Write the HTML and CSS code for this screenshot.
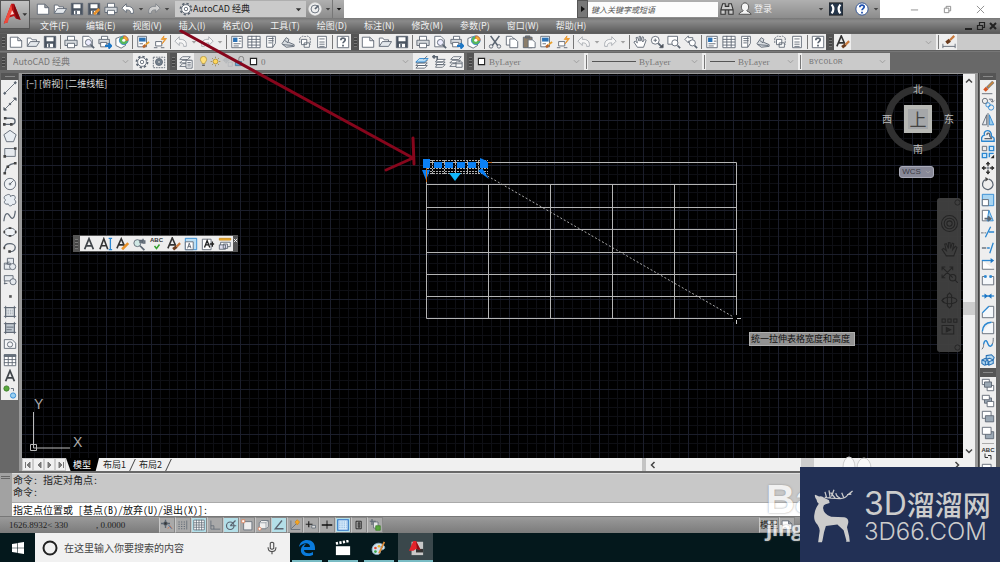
FILE: index.html
```html
<!DOCTYPE html>
<html lang="zh-CN">
<head>
<meta charset="utf-8">
<title>AutoCAD 经典</title>
<link rel="stylesheet" href="styles.css">
</head>
<body>
<svg class="sprite" aria-hidden="true">
  <symbol id="new" viewBox="0 0 16 16"><path fill="#fff" d="M1.500 2.500h8.500l4.500 4v7.500h-13zM10 2.500v4h4.500"/></symbol>
  <symbol id="open" viewBox="0 0 16 16"><path fill="#fff" d="M1.500 13V3.500h4l1.500 2h5V8"/><path fill="#e4e8ec" d="M1.500 13l3.500-5.500h10.500L12 13z"/></symbol>
  <symbol id="save" viewBox="0 0 16 16"><path fill="#4a5461" d="M1.500 1.500h13v13h-13z"/><path fill="#fff" stroke="none" d="M4 2.500h8v4.500H4zM4.500 10h7v4h-7z"/><path d="M7 10v4" stroke-width="2"/></symbol>
  <symbol id="saveas" viewBox="0 0 16 16"><use href="#save"/><path stroke="#e8912a" stroke-width="3" d="M8 14l6-6"/></symbol>
  <symbol id="print" viewBox="0 0 16 16"><path fill="#fff" d="M4 6V1.500h8V6"/><path fill="#d5d9dd" d="M1 6h14v6H1z"/><path fill="#fff" d="M4 9.500h8v5H4z"/></symbol>
  <symbol id="preview" viewBox="0 0 16 16"><path fill="#fff" d="M2 1.500h7l4 4v8H2z"/><circle cx="8.500" cy="8.500" r="3.500" fill="#eef"/><path stroke-width="2" d="M11 11l4 4"/></symbol>
  <symbol id="publish" viewBox="0 0 16 16"><path fill="#fff" d="M4 5V1.500h7V5"/><path fill="#d5d9dd" d="M1 5h12v5H1z"/><path fill="#fff" d="M3 8.500h7v5H3z"/><path stroke="#1b75c4" stroke-width="2.500" d="M8 12.500h5M12 9.500l3 3-3 3"/></symbol>
  <symbol id="cube" viewBox="0 0 16 16"><path fill="#fff" d="M1 4l5-2 6 2v8l-5 3-6-3z"/><circle cx="10" cy="6" r="5" fill="#58b957" stroke="#3987c8"/><path fill="#f2b233" stroke="#df6638" d="M10 6V1a5 5 0 0 1 5 5z"/><circle cx="10" cy="6" r="1.800" fill="#fff" stroke="none"/></symbol>
  <symbol id="match" viewBox="0 0 16 16"><path fill="#fff" d="M2 1.500h10v12H2z"/><path fill="#2b72b5" stroke="none" d="M3.500 3H11v4.500H3.500z"/><path d="M4 10h4" /><path stroke="#b8642a" stroke-width="3" d="M8 14l3-2.500"/><path stroke="#e8a02a" stroke-width="2" d="M11 11l4-3"/></symbol>
  <symbol id="batch" viewBox="0 0 16 16"><path fill="#fff" d="M3 7.500h7v5H3zM1 14.500h4M9 14.500h4"/><path stroke="#e8912a" fill="#f5b83a" d="M12.500 1l-3 4h4l-3 5 5-6h-3.500z"/></symbol>
  <symbol id="undo" viewBox="0 0 16 16"><path fill="#fff" d="M1 7l5-5v3c6-.5 9 2.500 8 8h-3c0-3-1-4-5-4v3z"/></symbol>
  <symbol id="redo" viewBox="0 0 16 16"><path fill="#fff" d="M15 7l-5-5v3C4 4.500 1 7.500 2 13h3c0-3 1-4 5-4v3z"/></symbol>
  <symbol id="props" viewBox="0 0 16 16"><path fill="#fff" d="M2 1.500h12v13H2z"/><path fill="#2b72b5" stroke="none" d="M3.500 3h5v5h-5z"/><path d="M10 4h3M10 7h3M4 10h8M4 12.500h6"/></symbol>
  <symbol id="center" viewBox="0 0 16 16"><path fill="#fff" d="M1 1.500h14v13H1z"/><path d="M5.500 1v13M10.500 1v13M1 5h14M1 8h14M1 11.500h14"/></symbol>
  <symbol id="palette" viewBox="0 0 16 16"><path fill="#fff" d="M3 1.500h10v8L10 14H3z"/><path d="M5 4h6M5 6.500h6M5 9h4M10 2v12"/></symbol>
  <symbol id="sheets" viewBox="0 0 16 16"><path fill="#d8dce0" d="M1 10l5-7 3 2-1 3 7 3v2l-9 1z"/><path d="M2 11l12 1M4 6l4 3"/></symbol>
  <symbol id="markup" viewBox="0 0 16 16"><path stroke-dasharray="2 1" d="M2 4q3-4 6-2 4-2 6 2M2 4v5M14 4v7"/><path fill="#fff" d="M4 5h6v6H4zM7 9h6v5H7z"/></symbol>
  <symbol id="calc" viewBox="0 0 16 16"><path fill="#fff" d="M3 1.500h10v13H3z"/><path d="M5 4.500h6M5 8h6M5 10.500h6M5 13h6"/></symbol>
  <symbol id="help" viewBox="0 0 16 16"><path fill="#fff" d="M1.500 1.500h13v13h-13z"/><path stroke-width="2" d="M5.500 6c0-3 5-3 5-.5 0 2-2.500 2-2.500 4M8 11v2"/></symbol>
  <symbol id="cut" viewBox="0 0 16 16"><path stroke-width="1.800" d="M3 1l8 11M13 1L5 12"/><circle cx="3.500" cy="13" r="2"/><circle cx="12.500" cy="13" r="2"/></symbol>
  <symbol id="copy" viewBox="0 0 16 16"><path fill="#fff" d="M1.500 1.500h6l3 3v7h-9z"/><path fill="#fff" d="M5.500 4.500h6l3 3v7h-9z"/></symbol>
  <symbol id="paste" viewBox="0 0 16 16"><path fill="#8b7d6a" d="M1.500 2.500h10v12h-10zM4 1h5v2.500H4z"/><path fill="#fff" d="M7 5.500h5l3 3v6H7z"/></symbol>
  <symbol id="hand" viewBox="0 0 16 16"><path fill="#fff" d="M5 14L1 8l1.500-1L5 9 3.500 3l1.500-.5L7 7l0-5.500h1.500L9 7l1.500-5 1.500.5L11 8l2.500-3 1.500 1-3 8z"/></symbol>
  <symbol id="navhand" viewBox="0 0 16 16"><path d="M5 14L1 8l1.500-1L5 9 3.500 3l1.500-.5L7 7l0-5.500h1.500L9 7l1.500-5 1.500.5L11 8l2.500-3 1.500 1-3 8z"/></symbol>
  <symbol id="zoomrt" viewBox="0 0 16 16"><circle cx="6" cy="6" r="4.500" fill="#fff"/><path stroke-width="2" d="M9.500 9.500l4 4"/><path d="M4 6h4M6 4v4"/><path fill="#444" d="M11 14.500h4v-4z"/></symbol>
  <symbol id="zoomwin" viewBox="0 0 16 16"><path fill="#fff" d="M1 1.500h11v9H1z"/><circle cx="9" cy="9" r="3.500" fill="#fff"/><path stroke-width="2" d="M12 12l3 3"/></symbol>
  <symbol id="zoomprev" viewBox="0 0 16 16"><path fill="#fff" d="M1 5l4-4v2h5v4H5v2z"/><circle cx="9.500" cy="9" r="3.500" fill="#fff"/><path stroke-width="2" d="M12 12l3 3"/></symbol>
  <symbol id="gear" viewBox="0 0 16 16"><circle cx="8" cy="8" r="6.300" stroke-width="2" stroke-dasharray="2.600 2.300"/><circle cx="8" cy="8" r="5" fill="#fff"/><circle cx="8" cy="8" r="2"/></symbol>
  <symbol id="gearbox" viewBox="0 0 16 16"><path stroke-dasharray="2 1" d="M1.500 2.500h13v12h-13z"/><circle cx="8" cy="8" r="4" fill="#75828f"/><circle cx="8" cy="8" r="1.500" fill="#fff"/></symbol>
  <symbol id="layers" viewBox="0 0 16 16"><path fill="#fff" d="M4 2h9l-3 3H1zM4 6h9l-3 3H1zM4 10h9l-3 3H1z"/><path fill="#fff" d="M8 6h7v9H8z"/><path d="M9.500 8.500h4M9.500 10.500h4M9.500 12.500h4"/></symbol>
  <symbol id="laycur" viewBox="0 0 16 16"><path fill="#fff" d="M4 6h10l-3 3H1zM4 9h10l-3 3H1zM4 12h10l-3 3H1z"/><path stroke="#2b87d1" fill="#b8dcf4" d="M5 4h10l-4 4H1z"/><path d="M10 5l4-4"/></symbol>
  <symbol id="layprev" viewBox="0 0 16 16"><path fill="#fff" d="M6 5h9l-3 3H4zM6 8h9l-3 3H4zM6 11h9l-3 3H4z"/><path stroke-width="1.800" d="M1 2h5v4M3 0L1 2l2 2"/></symbol>
  <symbol id="laystate" viewBox="0 0 16 16"><path fill="#fff" d="M5 2h9l-3 3H2zM4 6h9l-3 3H1zM4 10h9l-3 3H1z"/><path fill="#fff" d="M8 8h7v6H8zM8 10h7"/></symbol>
  <symbol id="bulb" viewBox="0 0 16 16"><path fill="#ffe079" stroke="#a88b32" d="M6 11c0-2-2.500-3-2.500-6a4.500 4.500 0 0 1 9 0c0 3-2.500 4-2.500 6z"/><path stroke-width="2" d="M6 13.500h4"/></symbol>
  <symbol id="sun" viewBox="0 0 16 16"><circle cx="8" cy="8" r="3.500" fill="#ffd75a" stroke="#a98322"/><path stroke="#8d7a3e" d="M8 1v2M8 13v2M1 8h2M13 8h2M3 3l1.500 1.500M11.500 11.500L13 13M3 13l1.500-1.500M11.500 4.500L13 3"/></symbol>
  <symbol id="freeze" viewBox="0 0 16 16"><g stroke="#aeb2b6"><circle cx="6" cy="6" r="3"/><path d="M6 1v10M1 6h10M9 9h6v6H9z"/></g></symbol>
  <symbol id="lock" viewBox="0 0 16 16"><path d="M7 8V4a3.500 3.500 0 0 1 7 0v3"/><path fill="#63acd8" stroke="#3f6788" d="M2 8h9v6H2z"/></symbol>
  <symbol id="swatch" viewBox="0 0 16 16"><path fill="#fff" stroke="#222" stroke-width="2" d="M2.500 2.500h11v11h-11z"/></symbol>
  <symbol id="chev" viewBox="0 0 8 8"><path d="M1 2.500l3 3 3-3"/></symbol>
  <symbol id="tri" viewBox="0 0 8 8"><path fill="currentColor" stroke="none" d="M1 2.500h6L4 6z"/></symbol>
  <symbol id="line" viewBox="0 0 16 16"><path d="M2.500 13.500l11-11"/><path stroke-width="2.500" d="M1 15l2-2M13 3l2-2"/></symbol>
  <symbol id="xline" viewBox="0 0 16 16"><path d="M2 14L14 2"/><path fill="#444" d="M1 15v-3l3 3zM15 1v3l-3-3z"/><circle cx="8" cy="8" r="1" fill="#444"/></symbol>
  <symbol id="pline" viewBox="0 0 16 16"><path stroke-width="1.600" d="M1 13h9c5 0 5-7 0-7H3"/><path fill="#444" stroke="none" d="M1 4.500h3v3H1zM0 11.500h3v3H0zM8 11.500h3v3H8z"/></symbol>
  <symbol id="polygon" viewBox="0 0 16 16"><path fill="#e8edf2" d="M8 1.500l7 5-3 8H4l-3-8z"/></symbol>
  <symbol id="rect" viewBox="0 0 16 16"><path fill="#e5e9ee" d="M2 4h12v9H2z"/><path fill="#444" stroke="none" d="M12.500 2.500h3v3h-3zM.5 11.500h3v3h-3z"/></symbol>
  <symbol id="arc" viewBox="0 0 16 16"><path stroke-width="1.400" d="M2 14C3 7 6 4 14 2.500"/><path fill="#444" stroke="none" d="M.5 12.500h3v3h-3zM12.500 1h3v3h-3zM4 5h3v3H4z"/></symbol>
  <symbol id="circle" viewBox="0 0 16 16"><circle cx="8" cy="8" r="6.500" fill="#eef1f4"/><path d="M8 8l4-4M6.500 8h3M8 6.500v3"/></symbol>
  <symbol id="cloud" viewBox="0 0 16 16"><path fill="#e8edf2" d="M4 2.500c3-2 5 0 4.500 1.500C12 1 16 4 13 7.500c3 2 1.500 6.500-2 5.500-2 3-5 1.500-5-.5C2 14 0 10 3 8 0 6 1.500 3 4 2.500z"/></symbol>
  <symbol id="spline" viewBox="0 0 16 16"><path stroke-width="1.400" d="M1 14C2 4 5 4 7 7s4 6 6 1q1-3 1-6"/></symbol>
  <symbol id="ellipse" viewBox="0 0 16 16"><ellipse cx="8" cy="8" rx="6.500" ry="4.500" fill="#eef1f4"/><path fill="#444" stroke="none" d="M6.500 2.500h3v2h-3zM.5 6.500h2v3h-2zM13.500 6.500h2v3h-2zM6.500 11.500h3v2h-3z"/></symbol>
  <symbol id="earc" viewBox="0 0 16 16"><path stroke-width="1.500" d="M1.500 8C2 1 14 2 14 7.500c0 4-4 5-7 4.500"/><path fill="#444" stroke="none" d="M6 10.500h3v3H6zM.5 6.500h2v3h-2z"/></symbol>
  <symbol id="insert" viewBox="0 0 16 16"><path fill="#e5e9ee" d="M5 1.500h7v7H5zM1.500 7h7v7h-7z"/><circle cx="11" cy="11" r="3.500" fill="#e5e9ee"/><path d="M3 9l4-4"/></symbol>
  <symbol id="block" viewBox="0 0 16 16"><path fill="#e5e9ee" d="M1.500 3h10v6h-10z"/><circle cx="11.500" cy="10" r="3.500" fill="#e5e9ee"/><path d="M2 9v4M1 12h4"/></symbol>
  <symbol id="point" viewBox="0 0 16 16"><path fill="#555" stroke="none" d="M7 7h3v3H7z"/></symbol>
  <symbol id="hatch" viewBox="0 0 16 16"><path fill="#dfe3e7" d="M3 3h10v10H3z"/><path d="M3 1v14M13 1v14M1 3h14M1 13h14"/><path stroke="#8a949e" stroke-dasharray="1 1" d="M4 6h8M4 8h8M4 10h8"/></symbol>
  <symbol id="gradient" viewBox="0 0 16 16"><path fill="#c0c8d0" d="M3 3h10v10H3z"/><path d="M3 1v14M13 1v14M1 3h14M1 13h14M4 7h8M4 10h6"/></symbol>
  <symbol id="region" viewBox="0 0 16 16"><path fill="#f5f6f8" d="M1.500 3h9l4 4v6h-13z"/><circle cx="8" cy="8.500" r="3"/></symbol>
  <symbol id="table" viewBox="0 0 16 16"><path fill="#fff" d="M1.500 2h13v12.500h-13z"/><path fill="#69757f" d="M1.500 2h13v2h-13z"/><path d="M1 7.500h14M1 11h14M6 4v10M10.500 4v10"/></symbol>
  <symbol id="letter" viewBox="0 0 16 16"><path stroke="#3f4449" stroke-width="2" d="M3 14L8 2l5 12M5 10h6"/></symbol>
  <symbol id="addsel" viewBox="0 0 16 16"><circle cx="4" cy="4" r="3" fill="#58a83c" stroke="#3d7d29"/><circle cx="11.500" cy="12" r="3" fill="#9bd0f2" stroke="#2b87d1"/><path d="M9 4h3v3"/></symbol>
  <symbol id="erase" viewBox="0 0 16 16"><path stroke="#777b80" stroke-width="3.500" d="M7 8l7-7"/><path stroke="#c9863c" stroke-width="2" d="M8 7l6-6"/><path stroke="#d5521f" stroke-width="4" d="M4 11l3-3"/><path d="M1 14.500h12"/></symbol>
  <symbol id="copyobj" viewBox="0 0 16 16"><circle cx="4.500" cy="4.500" r="3"/><circle cx="11.500" cy="12" r="3" stroke="#2b87d1"/><circle cx="8" cy="9" r="2.500" stroke="#2b87d1"/><path d="M9 2.500h4v3M11 4l2 2 2-2"/></symbol>
  <symbol id="mirror" viewBox="0 0 16 16"><path fill="#e5e9ee" d="M6.500 2v11.500h-5z"/><path stroke="#2b87d1" fill="#9bcdef" d="M9.500 2v11.500h5z"/><path d="M8 0v16"/></symbol>
  <symbol id="offset" viewBox="0 0 16 16"><path stroke="#2b87d1" stroke-width="1.600" d="M1 14h14v-3c0-2-3-2-3-3 0-9-10-7-8-1-3 0-4 4-3 7z"/><path stroke-width="1.600" d="M4 11h8c0-2-2-1-2-4 0-3-4-3-3 0"/></symbol>
  <symbol id="array" viewBox="0 0 16 16"><path d="M1.500 1.500h5v5h-5z"/><path stroke="#2b87d1" stroke-width="1.500" fill="#cfe7f8" d="M9.500 1.500h5v5h-5zM1.500 9.500h5v5h-5zM9.500 14v-4.500h5"/><path fill="#222" stroke="none" d="M15 11v4h-4z"/></symbol>
  <symbol id="move" viewBox="0 0 16 16"><path fill="#333" stroke="#333" stroke-width="1" d="M8 1l2 2.500H6zM8 15l2-2.500H6zM1 8l2.500-2v4zM15 8l-2.500-2v4z"/><path stroke-width="1.500" stroke="#333" d="M8 3v3M8 10v3M3 8h3M10 8h3"/><circle cx="8" cy="8" r="1"/></symbol>
  <symbol id="rotate" viewBox="0 0 16 16"><path stroke-width="1.400" d="M9 2.500a6 6 0 1 1-4 .5"/><path fill="#444" stroke="none" d="M5 0v5l4-2.500z"/></symbol>
  <symbol id="scale" viewBox="0 0 16 16"><path stroke="#2b87d1" fill="#a9d5f2" d="M1.500 1.500h13v13h-13z"/><path fill="#fff" d="M1.500 7.500h7v7h-7z"/></symbol>
  <symbol id="stretch" viewBox="0 0 16 16"><path fill="#fff" d="M1.500 1.500H9v12H1.500z"/><path stroke="#2b87d1" fill="#a9d5f2" d="M9 1.500l5 12H7z"/><path stroke-width="2" d="M4 11h6M8 8.500l3 2.500-3 2.500"/></symbol>
  <symbol id="trim" viewBox="0 0 16 16"><path stroke-dasharray="3 1" d="M0 9h6"/><path stroke="#2b87d1" stroke-width="1.500" d="M5 14L11 2M9 8h6"/></symbol>
  <symbol id="extend" viewBox="0 0 16 16"><path stroke-width="1.500" d="M1 8h5"/><path stroke="#2b87d1" stroke-width="1.500" d="M7 8h3M10 14l4-12"/></symbol>
  <symbol id="breakpt" viewBox="0 0 16 16"><path fill="#fff" d="M15 14H1.500V4"/><path stroke="#2b87d1" stroke-width="1.500" d="M1 4h12"/><path fill="#1b75c4" stroke="none" d="M11 1v6l4-3z"/></symbol>
  <symbol id="break" viewBox="0 0 16 16"><path fill="#f5f8fb" d="M4 4H1.500v9.500h13V4H12"/><path fill="#2b87d1" stroke="#2b87d1" d="M4 3h2v2H4zM10 3h2v2h-2z"/></symbol>
  <symbol id="join" viewBox="0 0 16 16"><path stroke="#2b87d1" stroke-width="1.500" d="M1 8h14"/><path fill="#1b75c4" stroke="none" d="M4 5v6l4-3zM12 5v6L8 8z"/></symbol>
  <symbol id="chamfer" viewBox="0 0 16 16"><path fill="#f5f8fb" d="M1.500 9v5.500h13v-13H9"/><path stroke="#2b87d1" stroke-width="1.600" d="M1.500 9L9 1.500"/></symbol>
  <symbol id="fillet" viewBox="0 0 16 16"><path fill="#f5f8fb" d="M1.500 12v2.500h13v-13H12"/><path stroke="#2b87d1" stroke-width="1.600" d="M1.500 12C2 5 5 2 12 1.500"/></symbol>
  <symbol id="blend" viewBox="0 0 16 16"><path d="M1 14c2-2 2-4 2-6M13 8c1-2 1-4 1-7"/><path stroke="#2b87d1" stroke-width="1.600" d="M3 8c2-7 4-3 5 0s4 4 5 0"/></symbol>
  <symbol id="explode" viewBox="0 0 16 16"><path stroke="#2b72b5" stroke-width="1.200" fill="#b4d8f0" d="M6 3l6-1 3 3-1 3-4-2-4 1zM1 8l4-2 3 2v5l-4 1-3-2zM1 8l4 1.500 3-1.500M5 9.500V14M9 10l5-2v4l-5 2z"/></symbol>
  <symbol id="order1" viewBox="0 0 16 16"><path fill="#fff" d="M1.500 1.500h8v6h-8zM7 8.500h7.500v6H7z"/><path fill="#9aa7b3" d="M4 4.500h8v6H4z"/></symbol>
  <symbol id="order2" viewBox="0 0 16 16"><path fill="#9aa7b3" d="M4 4.500h8v6H4z"/><path fill="#fff" d="M1.500 1.500h8v5h-8zM7 8.500h7.500v6H7z"/></symbol>
  <symbol id="order3" viewBox="0 0 16 16"><path fill="#fff" d="M1.500 1.500h10v8h-10z"/><path fill="#9aa7b3" d="M5 6.500h9.500v7H5z"/></symbol>
  <symbol id="order4" viewBox="0 0 16 16"><path fill="#9aa7b3" d="M5 6.500h9.500v8H5z"/><path fill="#fff" d="M1.500 1.500h10v8h-10z"/></symbol>
  <symbol id="spell" viewBox="0 0 16 16"><circle cx="5" cy="7" r="4" fill="#cfe7e4"/><path stroke-width="2" d="M8 10l5 5"/><path stroke-width="1.500" d="M8 7V4h2v3M11.500 2v5h2V4.500h-2"/></symbol>
  <symbol id="check" viewBox="0 0 16 16"><path stroke="#33a02c" stroke-width="3" d="M3 6l4 5 6-8"/></symbol>
  <symbol id="editA" viewBox="0 0 16 16"><path stroke="#333" stroke-width="1.800" d="M1 13L6 2l4 9M3 9h6"/><path stroke="#e8912a" stroke-width="3" d="M7 14l7-7"/></symbol>
  <symbol id="styleA" viewBox="0 0 16 16"><path stroke="#333" stroke-width="1.800" d="M1 13L6 1l4 9M3 9h6"/><path stroke="#6a3b1d" stroke-width="3.500" d="M7 14l4-3"/><path stroke="#c97a3d" stroke-width="2.500" d="M11 11l4-4"/></symbol>
  <symbol id="cursorA" viewBox="0 0 16 16"><path stroke="#333" stroke-width="1.800" d="M1 14L5.500 2 10 14M3 10h5"/><path stroke="#2b87d1" stroke-width="1.500" d="M13 2v12M11 1.500h4M11 14.500h4"/></symbol>
  <symbol id="scaleA" viewBox="0 0 16 16"><path stroke="#2b87d1" fill="#b9def5" d="M1.500 1.500h13v13h-13z"/><path fill="#fff" d="M1.500 5.500h9v9h-9z"/><path d="M4 13l2-6 2 6M4.500 11h3"/></symbol>
  <symbol id="justA" viewBox="0 0 16 16"><path fill="#fff" d="M1.500 2.500h10v12h-10z"/><path stroke="#222" stroke-width="1.500" d="M4 12l3-8 3 8M5 9h4M10 8h5M13 5v6"/></symbol>
  <symbol id="spaceA" viewBox="0 0 16 16"><path fill="#f3b32c" stroke="#c98b1f" d="M1.500 1.500h13v2h-13z"/><path fill="#fff" d="M3 6h11v5H3z"/><path fill="#dde" d="M1.500 9h7v5h-7zM6 8h5v5H6z"/></symbol>
  <symbol id="dimstyle" viewBox="0 0 16 16"><path d="M1 10v5M15 10v5M1 13h14"/><path stroke="#6a3b1d" stroke-width="4" d="M5 9l4-3"/><path stroke="#c97a3d" stroke-width="2.500" d="M9 6l5-5"/></symbol>
  <symbol id="snap" viewBox="0 0 16 16"><path stroke-width="1.800" d="M0 6h12M6 1v11"/><path fill="#333" d="M4 4h4v4H4z"/><path stroke="#d66a3c" d="M9 13l3-4 3 4"/><path stroke="#2b72b5" d="M10 8l4 5"/></symbol>
  <symbol id="dots" viewBox="0 0 16 16"><path stroke-dasharray="1.500 2" stroke-width="1.500" d="M2 4h9M2 7h9M2 10h9M2 13h9"/><path d="M13 2v12"/></symbol>
  <symbol id="grid" viewBox="0 0 16 16"><path fill="#fff" d="M1 1.500h14v13H1z"/><path d="M4.500 1v14M8 1v14M11.500 1v14M1 5h14M1 8h14M1 11h14"/></symbol>
  <symbol id="ortho" viewBox="0 0 16 16"><path d="M2.500 2v11.500H15M2.500 9h4v4.500"/></symbol>
  <symbol id="polar" viewBox="0 0 16 16"><circle cx="7" cy="9" r="5" stroke-width="1.600"/><path stroke-width="1.600" d="M7 9l7-7M7 9h8"/></symbol>
  <symbol id="osnap" viewBox="0 0 16 16"><path fill="#eee" d="M3.500 3.500h11v11h-11z"/><path fill="#fff" stroke="#df7a4f" d="M1 1h4v4H1z"/></symbol>
  <symbol id="osnap3" viewBox="0 0 16 16"><path fill="#eee" d="M3 5l3-3h9v8l-3 3H3z"/><path stroke="#8a929a" d="M3 5h9v8M12 5l3-3"/><circle cx="3.500" cy="13" r="2" fill="#fff" stroke="#df7a4f"/></symbol>
  <symbol id="otrack" viewBox="0 0 16 16"><path stroke-width="1.800" d="M12 2L3 13h11"/></symbol>
  <symbol id="ducs" viewBox="0 0 16 16"><path d="M2.500 2v12H15M3 13l8-8"/><path fill="#f5a623" stroke="#d2881a" d="M11 1l3 3-3 4-3-4z"/></symbol>
  <symbol id="dyn" viewBox="0 0 16 16"><path stroke="#222" stroke-width="1.600" d="M1 7h9M5 3v8"/><path fill="#ddd" d="M9 8.500h5v3.500H9z"/></symbol>
  <symbol id="lwt" viewBox="0 0 16 16"><path stroke="#111" stroke-width="2" d="M1 8h14"/><path stroke="#111" stroke-width="1.200" d="M8 2v11"/></symbol>
  <symbol id="tpy" viewBox="0 0 16 16"><path stroke="#2b72c4" stroke-width="1.500" fill="#d7eafa" d="M1 1h14v14H1z"/><path stroke="#6ba4d8" stroke-dasharray="1.500 1.500" d="M3 4h10M3 6.500h10M3 9h10M3 11.500h10"/></symbol>
  <symbol id="qp" viewBox="0 0 16 16"><path stroke="#222" stroke-width="1.200" d="M4 3h7v10H4zM7 5h2v6H7z"/></symbol>
  <symbol id="sc" viewBox="0 0 16 16"><path stroke-width="1.500" d="M1 3h8M4 0v8"/><path fill="#e7e7e7" d="M6 4h6v8H6z"/><path fill="#58a83c" stroke="#3d7d29" d="M9 9h6v6H9z"/></symbol>
  <symbol id="navwheel" viewBox="0 0 16 16"><circle cx="8" cy="8" r="7.500"/><circle cx="8" cy="8" r="5"/><circle cx="8" cy="8" r="2.500"/></symbol>
  <symbol id="navzoom" viewBox="0 0 16 16"><path d="M1 1l10 10M11 1L1 11M1 4V1h3M8 1h3v3M1 8v3h3"/><circle cx="11" cy="11" r="3"/><path d="M13 13l3 3"/></symbol>
  <symbol id="navorbit" viewBox="0 0 16 16"><ellipse cx="8" cy="8" rx="7" ry="3"/><path d="M6 3l2-2 2 2v10l-2 2-2-2zM3 6L1 8l2 2"/></symbol>
  <symbol id="navmotion" viewBox="0 0 16 16"><path d="M1 1h3v3H1zM6.500 1h3v3h-3zM12 1h3v3h-3zM1 7h11v8H1z"/><path fill="#2b2b2b" d="M5 9v4l4-2z"/></symbol>
</svg>

<header class="app-head">
  <button class="app-btn" aria-label="应用程序菜单">
    <svg viewBox="0 0 30 30"><path fill="#b80f14" d="M3 24L11 3h3l7 17-5-1-2-3-6 2-1 5z"/><path fill="#f04a3c" d="M3 24L11 3l1 8-3 7-2 5z"/><path fill="#fbd7d2" d="M10 15l2-5 2 4z"/><path fill="#7c0a10" d="M14 3l7 17-4-1-3-8z"/><path fill="#333" d="M23 13h5l-2.500 3z"/></svg>
  </button>
  <div class="head-rows">
    <div class="titlebar">
      <div class="quick">
        <button class="tool" aria-label="新建"><svg class="ic"><use href="#new"/></svg></button>
        <button class="tool" aria-label="打开"><svg class="ic"><use href="#open"/></svg></button>
        <button class="tool" aria-label="保存"><svg class="ic"><use href="#save"/></svg></button>
        <button class="tool" aria-label="另存为"><svg class="ic"><use href="#saveas"/></svg></button>
        <button class="tool" aria-label="打印"><svg class="ic"><use href="#print"/></svg></button>
        <button class="tool" aria-label="放弃"><svg class="ic"><use href="#undo"/></svg></button>
        <button class="drop" aria-label="放弃列表"><svg><use href="#tri"/></svg></button>
        <button class="tool dim" aria-label="重做"><svg class="ic"><use href="#redo"/></svg></button>
        <button class="drop" aria-label="重做列表"><svg><use href="#tri"/></svg></button>
        <label class="combo title-combo"><svg class="ic"><use href="#gear"/></svg><select aria-label="工作空间"><option>AutoCAD 经典</option></select><svg class="chev"><use href="#tri"/></svg></label>
        <button class="tool" aria-label="性能"><svg class="ic" viewBox="0 0 16 16"><circle cx="8" cy="8" r="7" fill="#eee" stroke="#eee"/><circle cx="8" cy="8" r="4.500"/><path d="M8 8l4-4" stroke-width="2"/></svg></button>
        <button class="drop" aria-label="更多"><svg><use href="#tri"/></svg></button>
        <button class="drop last" aria-label="自定义"><svg><use href="#tri"/></svg></button>
      </div>
      <div class="title-gap"></div>
      <div class="info">
        <button class="expand" aria-label="展开"><svg viewBox="0 0 8 8"><path fill="#111" d="M2 1l4 3-4 3z"/></svg></button>
        <input class="search" type="text" placeholder="键入关键字或短语" aria-label="搜索">
        <button class="tool" aria-label="查找"><svg class="ic" viewBox="0 0 16 16"><path fill="#ccc" stroke="#333" stroke-width="1.200" d="M3 2h3v3h4V2h3l2 7v5h-5V9H6v5H1V9zM1 9h5M10 9h5"/></svg></button>
        <button class="login"><svg class="ic" viewBox="0 0 16 16"><path fill="#f4f4f4" stroke="#444" d="M1 14c1-3 5-3 5-4-4-3-2-9 2-9s6 6 2 9c0 1 4 1 5 4z"/></svg><span>登录</span></button>
        <button class="drop" aria-label="登录选项"><svg><use href="#tri"/></svg></button>
        <button class="tool exch" aria-label="Exchange"><svg class="ic" viewBox="0 0 16 16"><path fill="#26364a" stroke="#222" d="M0 1h16v14H0z"/><path stroke="#fff" stroke-width="2.500" d="M3 3q4 5 0 10M13 3q-4 5 0 10"/></svg></button>
        <button class="tool" aria-label="帮助"><svg class="ic" viewBox="0 0 16 16"><circle cx="8" cy="8" r="7" fill="#fff" stroke="#234a92"/><path stroke="#1e50b0" stroke-width="2" d="M5.500 6c0-3 5-3 5-.5 0 2-2.500 2-2.500 4M8 11v2"/></svg></button>
        <button class="drop" aria-label="帮助选项"><svg><use href="#tri"/></svg></button>
      </div>
      <div class="winbtns">
        <button aria-label="最小化"><svg viewBox="0 0 10 10"><path d="M1 5.500h8"/></svg></button>
        <button aria-label="还原"><svg viewBox="0 0 10 10"><path d="M1.500 3.500h5v5h-5zM3.500 3.500v-2h5v5h-2"/></svg></button>
        <button aria-label="关闭"><svg viewBox="0 0 10 10"><path d="M1 1l8 8M9 1L1 9"/></svg></button>
      </div>
    </div>
    <nav class="menubar">
      <button>文件(F)</button><button>编辑(E)</button><button>视图(V)</button><button>插入(I)</button><button>格式(O)</button><button>工具(T)</button><button>绘图(D)</button><button>标注(N)</button><button>修改(M)</button><button>参数(P)</button><button>窗口(W)</button><button>帮助(H)</button>
      <div class="docbtns">
        <button aria-label="最小化图形"><svg viewBox="0 0 10 10"><path d="M1 8h7"/></svg></button>
        <button aria-label="还原图形"><svg viewBox="0 0 10 10"><path stroke-width="1.200" d="M1.500 4.500h5v4h-5zM3.500 4V1.500h5v5H7"/></svg></button>
        <button aria-label="关闭图形"><svg viewBox="0 0 10 10"><path d="M2 2l6 6M8 2L2 8"/></svg></button>
      </div>
    </nav>
  </div>
</header>

<div class="bar row-one">
  <div class="group">
    <i class="grip"></i>
    <button class="tool" aria-label="新建"><svg class="ic"><use href="#new"/></svg></button><button class="tool" aria-label="打开"><svg class="ic"><use href="#open"/></svg></button><button class="tool" aria-label="保存"><svg class="ic"><use href="#save"/></svg></button><i class="sep"></i>
    <button class="tool" aria-label="打印"><svg class="ic"><use href="#print"/></svg></button><button class="tool" aria-label="打印预览"><svg class="ic"><use href="#preview"/></svg></button><button class="tool" aria-label="发布"><svg class="ic"><use href="#publish"/></svg></button><button class="tool" aria-label="三维打印"><svg class="ic"><use href="#cube"/></svg></button><i class="sep"></i>
    <button class="tool" aria-label="特性匹配"><svg class="ic"><use href="#match"/></svg></button><button class="tool" aria-label="块编辑器"><svg class="ic"><use href="#batch"/></svg></button><i class="sep"></i>
    <button class="tool dim" aria-label="放弃"><svg class="ic"><use href="#undo"/></svg></button><button class="drop dim" aria-label="放弃列表"><svg><use href="#tri"/></svg></button><button class="tool dim" aria-label="重做"><svg class="ic"><use href="#redo"/></svg></button><button class="drop dim" aria-label="重做列表"><svg><use href="#tri"/></svg></button><i class="sep"></i>
    <button class="tool" aria-label="特性"><svg class="ic"><use href="#props"/></svg></button><button class="tool" aria-label="设计中心"><svg class="ic"><use href="#center"/></svg></button><button class="tool" aria-label="工具选项板"><svg class="ic"><use href="#palette"/></svg></button><button class="tool" aria-label="图纸集"><svg class="ic"><use href="#sheets"/></svg></button><button class="tool" aria-label="标记集"><svg class="ic"><use href="#markup"/></svg></button><button class="tool" aria-label="计算器"><svg class="ic"><use href="#calc"/></svg></button><i class="sep"></i>
    <button class="tool" aria-label="帮助"><svg class="ic"><use href="#help"/></svg></button>
  </div>
  <div class="group">
    <i class="grip"></i>
    <button class="tool" aria-label="新建"><svg class="ic"><use href="#new"/></svg></button><button class="tool" aria-label="打开"><svg class="ic"><use href="#open"/></svg></button><button class="tool" aria-label="保存"><svg class="ic"><use href="#save"/></svg></button><i class="sep"></i>
    <button class="tool" aria-label="打印"><svg class="ic"><use href="#print"/></svg></button><button class="tool" aria-label="打印预览"><svg class="ic"><use href="#preview"/></svg></button><button class="tool" aria-label="发布"><svg class="ic"><use href="#publish"/></svg></button><button class="tool" aria-label="三维打印"><svg class="ic"><use href="#cube"/></svg></button><i class="sep"></i>
    <button class="tool" aria-label="剪切"><svg class="ic"><use href="#cut"/></svg></button><button class="tool" aria-label="复制"><svg class="ic"><use href="#copy"/></svg></button><button class="tool" aria-label="粘贴"><svg class="ic"><use href="#paste"/></svg></button><button class="tool" aria-label="特性匹配"><svg class="ic"><use href="#match"/></svg></button><button class="tool" aria-label="块编辑器"><svg class="ic"><use href="#batch"/></svg></button><i class="sep"></i>
    <button class="tool dim" aria-label="放弃"><svg class="ic"><use href="#undo"/></svg></button><button class="drop dim" aria-label="放弃列表"><svg><use href="#tri"/></svg></button><button class="tool dim" aria-label="重做"><svg class="ic"><use href="#redo"/></svg></button><button class="drop dim" aria-label="重做列表"><svg><use href="#tri"/></svg></button><i class="sep"></i>
    <button class="tool" aria-label="平移"><svg class="ic"><use href="#hand"/></svg></button><button class="tool" aria-label="实时缩放"><svg class="ic"><use href="#zoomrt"/></svg></button><button class="tool" aria-label="窗口缩放"><svg class="ic"><use href="#zoomwin"/></svg></button><button class="tool" aria-label="缩放上一个"><svg class="ic"><use href="#zoomprev"/></svg></button><i class="sep"></i>
    <button class="tool" aria-label="特性"><svg class="ic"><use href="#props"/></svg></button><button class="tool" aria-label="设计中心"><svg class="ic"><use href="#center"/></svg></button><button class="tool" aria-label="工具选项板"><svg class="ic"><use href="#palette"/></svg></button><button class="tool" aria-label="图纸集"><svg class="ic"><use href="#sheets"/></svg></button><button class="tool" aria-label="标记集"><svg class="ic"><use href="#markup"/></svg></button><button class="tool" aria-label="计算器"><svg class="ic"><use href="#calc"/></svg></button><i class="sep"></i>
    <button class="tool" aria-label="帮助"><svg class="ic"><use href="#help"/></svg></button>
  </div>
  <div class="group grow">
    <i class="grip"></i>
    <button class="tool" aria-label="文字样式"><svg class="ic"><use href="#styleA"/></svg></button>
    <label class="combo grow"><select aria-label="文字样式"><option></option></select><svg class="chev"><use href="#chev"/></svg></label><i class="sep"></i>
    <button class="tool" aria-label="标注样式"><svg class="ic"><use href="#dimstyle"/></svg></button>
    <span class="combo stub"></span>
  </div>
</div>

<div class="bar row-two">
  <div class="group">
    <i class="grip"></i>
    <label class="combo w-space"><select aria-label="工作空间"><option>AutoCAD 经典</option></select><svg class="chev"><use href="#chev"/></svg></label>
    <button class="tool" aria-label="工作空间设置"><svg class="ic"><use href="#gear"/></svg></button><button class="tool" aria-label="我的工作空间"><svg class="ic"><use href="#gearbox"/></svg></button>
  </div>
  <div class="group">
    <i class="grip"></i>
    <button class="tool" aria-label="图层特性"><svg class="ic"><use href="#layers"/></svg></button>
    <label class="combo w-layer"><svg class="mini"><use href="#bulb"/></svg><svg class="mini"><use href="#sun"/></svg><svg class="mini"><use href="#freeze"/></svg><svg class="mini"><use href="#lock"/></svg><svg class="mini small"><use href="#swatch"/></svg><select class="serif" aria-label="图层"><option>0</option></select><svg class="chev"><use href="#chev"/></svg></label>
    <button class="tool" aria-label="置为当前"><svg class="ic"><use href="#laycur"/></svg></button><button class="tool" aria-label="上一个图层"><svg class="ic"><use href="#layprev"/></svg></button><button class="tool" aria-label="图层状态"><svg class="ic"><use href="#laystate"/></svg></button>
  </div>
  <div class="group">
    <i class="grip"></i>
    <label class="combo w-color"><svg class="mini small"><use href="#swatch"/></svg><select class="serif" aria-label="颜色"><option>ByLayer</option></select><svg class="chev"><use href="#chev"/></svg></label><i class="sep"></i>
    <label class="combo w-type"><i class="rule"></i><select class="serif" aria-label="线型"><option>ByLayer</option></select><svg class="chev"><use href="#chev"/></svg></label><i class="sep"></i>
    <label class="combo w-weight"><i class="rule short"></i><select class="serif" aria-label="线宽"><option>ByLayer</option></select><svg class="chev"><use href="#chev"/></svg></label><i class="sep"></i>
    <label class="combo w-plot"><select class="mono" aria-label="打印样式"><option>BYCOLOR</option></select><svg class="chev"><use href="#chev"/></svg></label>
  </div>
</div>

<main class="work">
  <div class="side">
    <i class="grip-h"></i>
    <div class="stack">
      <button aria-label="直线"><svg class="ic"><use href="#line"/></svg></button><button aria-label="构造线"><svg class="ic"><use href="#xline"/></svg></button><button aria-label="多段线"><svg class="ic"><use href="#pline"/></svg></button><button aria-label="多边形"><svg class="ic"><use href="#polygon"/></svg></button><button aria-label="矩形"><svg class="ic"><use href="#rect"/></svg></button><button aria-label="圆弧"><svg class="ic"><use href="#arc"/></svg></button><button aria-label="圆"><svg class="ic"><use href="#circle"/></svg></button><button aria-label="修订云线"><svg class="ic"><use href="#cloud"/></svg></button><button aria-label="样条曲线"><svg class="ic"><use href="#spline"/></svg></button><button aria-label="椭圆"><svg class="ic"><use href="#ellipse"/></svg></button><button aria-label="椭圆弧"><svg class="ic"><use href="#earc"/></svg></button><button aria-label="插入块"><svg class="ic"><use href="#insert"/></svg></button><button aria-label="创建块"><svg class="ic"><use href="#block"/></svg></button><button aria-label="点"><svg class="ic"><use href="#point"/></svg></button><button aria-label="图案填充"><svg class="ic"><use href="#hatch"/></svg></button><button aria-label="渐变色"><svg class="ic"><use href="#gradient"/></svg></button><button aria-label="面域"><svg class="ic"><use href="#region"/></svg></button><button aria-label="表格"><svg class="ic"><use href="#table"/></svg></button><button aria-label="多行文字"><svg class="ic"><use href="#letter"/></svg></button><button aria-label="添加选定对象"><svg class="ic"><use href="#addsel"/></svg></button>
    </div>
  </div>

  <section class="view">
    <div class="canvas">
      <svg class="drawing">
        <defs>
          <pattern id="gridlines" x="39" y="46" width="224" height="224" patternUnits="userSpaceOnUse">
            <path stroke="#0e0f14" d="M9.500 0v224M18.500 0v224M27.500 0v224M36.500 0v224M54.500 0v224M63.500 0v224M72.500 0v224M81.500 0v224M99.500 0v224M108.500 0v224M116.500 0v224M125.500 0v224M143.500 0v224M152.500 0v224M161.500 0v224M170.500 0v224M188.500 0v224M197.500 0v224M206.500 0v224M215.500 0v224M0 9.500h224M0 18.500h224M0 27.500h224M0 36.500h224M0 54.500h224M0 63.500h224M0 72.500h224M0 81.500h224M0 99.500h224M0 108.500h224M0 116.500h224M0 125.500h224M0 143.500h224M0 152.500h224M0 161.500h224M0 170.500h224M0 188.500h224M0 197.500h224M0 206.500h224M0 215.500h224"/>
            <path stroke="#1b1e2b" d="M.5 0v224M45.500 0v224M90.500 0v224M134.500 0v224M179.500 0v224M0 .5h224M0 45.500h224M0 90.500h224M0 134.500h224M0 179.500h224"/>
          </pattern>
        </defs>
        <rect width="100%" height="100%" fill="url(#gridlines)"/>
        <g transform="translate(-22 -74)" fill="none">
          <path stroke="#b4b4b4" d="M426.500 162.500h310v156h-310zM426.500 184.500h310M426.500 207.500h310M426.500 229.500h310M426.500 252.500h310M426.500 274.500h310M426.500 296.500h310M488.500 184.500v134M550.500 184.500v134M612.500 184.500v134M674.500 184.500v134"/>
          <path stroke="#aaa" stroke-dasharray="2 2" d="M484 174l253 145"/>
          <path fill="#000" d="M733 315h7v7h-7z"/>
          <path stroke="#ccc" d="M736.500 320v4M737 318.500h4"/>
          <g stroke="#b0b0b0" stroke-dasharray="2 1"><path d="M427 160.500h61M427 168.500h61M427 171.500h61M427 173.500h61M432.500 160v14M444.500 160v14M455.500 160v14M467.500 160v14M478.500 160v14"/></g>
          <g fill="#0a80f5"><path d="M423 159h7v9h-7zM434 162h8v6h-8zM445 162h8v6h-8zM457 162h8v6h-8zM468 162h8v6h-8zM480 162h8v6h-8zM422 170h8l-4 10zM480 158l7 3v2h-7zM478 171l4-3 7 11z"/><path fill="#12b8fa" d="M449 173h12l-6 8z"/></g>
          <path stroke="#c06a20" d="M426.500 168v14M488 162.500h4"/>
          <path stroke="#bbb" d="M33.500 412v36H70M30.500 444.500h6v6h-6z"/>
        </g>
      </svg>
      <span class="vlabel">[−] [俯视] [二维线框]</span>
      <span class="axis axis-y">Y</span><span class="axis axis-x">X</span>
      <span class="tip">统一拉伸表格宽度和高度</span>
      <div class="cube">
        <span class="n">北</span><span class="w">西</span><button class="face">上</button><span class="e">东</span><span class="s">南</span>
      </div>
      <button class="wcs">WCS<svg><use href="#chev"/></svg></button>
      <div class="navbar">
        <svg class="dot" viewBox="0 0 8 8"><circle cx="4" cy="4" r="3"/></svg>
        <button aria-label="控制盘"><svg><use href="#navwheel"/></svg></button>
        <button aria-label="平移"><svg><use href="#navhand"/></svg></button>
        <button aria-label="缩放"><svg><use href="#navzoom"/></svg></button>
        <button aria-label="动态观察"><svg><use href="#navorbit"/></svg></button>
        <button aria-label="播放"><svg><use href="#navmotion"/></svg></button>
        <svg class="dot" viewBox="0 0 8 8"><circle cx="4" cy="4" r="3"/></svg>
      </div>
      <div class="floatbar group">
        <i class="grip"></i>
        <button class="tool" aria-label="多行文字"><svg class="ic"><use href="#letter"/></svg></button><button class="tool" aria-label="单行文字"><svg class="ic"><use href="#cursorA"/></svg></button><button class="tool" aria-label="编辑文字"><svg class="ic"><use href="#editA"/></svg></button><button class="tool" aria-label="查找"><svg class="ic"><use href="#spell"/></svg></button><button class="tool abc"><span>ABC</span><svg><use href="#check"/></svg></button><button class="tool" aria-label="文字样式"><svg class="ic"><use href="#styleA"/></svg></button><button class="tool" aria-label="缩放文字"><svg class="ic"><use href="#scaleA"/></svg></button><button class="tool" aria-label="对正文字"><svg class="ic"><use href="#justA"/></svg></button><button class="tool" aria-label="转换空间距离"><svg class="ic"><use href="#spaceA"/></svg></button>
        <button class="float-x" aria-label="关闭"><svg viewBox="0 0 6 6"><path stroke="#fff" d="M1 1l4 4M5 1L1 5"/></svg></button>
      </div>
    </div>
    <div class="vscroll">
      <button aria-label="向上"><svg viewBox="0 0 8 8"><path d="M1 5.500l3-3 3 3"/></svg></button>
      <i class="thumb"></i>
      <button aria-label="向下"><svg viewBox="0 0 8 8"><path d="M1 2.500l3 3 3-3"/></svg></button>
    </div>
    <div class="bottom">
      <div class="tabs">
        <button class="tabnav" aria-label="第一个"><svg viewBox="0 0 8 8"><path d="M1.500 1v6M6 1v6L3 4z"/></svg></button><button class="tabnav" aria-label="上一个"><svg viewBox="0 0 8 8"><path d="M6 1v6L3 4z"/></svg></button><button class="tabnav" aria-label="下一个"><svg viewBox="0 0 8 8"><path d="M2 1v6l3-3z"/></svg></button><button class="tabnav" aria-label="最后一个"><svg viewBox="0 0 8 8"><path d="M2 1v6l3-3zM6.500 1v6"/></svg></button>
        <button class="tab active">模型</button><button class="tab">布局1</button><i class="slash"></i><button class="tab">布局2</button><i class="slash"></i>
      </div>
      <div class="hscroll">
        <i class="split"></i>
        <button aria-label="向左"><svg viewBox="0 0 8 8"><path d="M5.500 1l-3 3 3 3"/></svg></button>
        <i class="thumb"></i>
        <button aria-label="向右"><svg viewBox="0 0 8 8"><path d="M2.500 1l3 3-3 3"/></svg></button>
      </div>
    </div>
  </section>

  <div class="side right">
    <i class="grip-h"></i>
    <div class="stack">
      <button aria-label="删除"><svg class="ic"><use href="#erase"/></svg></button><button aria-label="复制"><svg class="ic"><use href="#copyobj"/></svg></button><button aria-label="镜像"><svg class="ic"><use href="#mirror"/></svg></button><button aria-label="偏移"><svg class="ic"><use href="#offset"/></svg></button><button aria-label="阵列"><svg class="ic"><use href="#array"/></svg></button><button aria-label="移动"><svg class="ic"><use href="#move"/></svg></button><button aria-label="旋转"><svg class="ic"><use href="#rotate"/></svg></button><button aria-label="缩放"><svg class="ic"><use href="#scale"/></svg></button><button aria-label="拉伸"><svg class="ic"><use href="#stretch"/></svg></button><button aria-label="修剪"><svg class="ic"><use href="#trim"/></svg></button><button aria-label="延伸"><svg class="ic"><use href="#extend"/></svg></button><button aria-label="打断于点"><svg class="ic"><use href="#breakpt"/></svg></button><button aria-label="打断"><svg class="ic"><use href="#break"/></svg></button><button aria-label="合并"><svg class="ic"><use href="#join"/></svg></button><button aria-label="倒角"><svg class="ic"><use href="#chamfer"/></svg></button><button aria-label="圆角"><svg class="ic"><use href="#fillet"/></svg></button><button aria-label="光顺曲线"><svg class="ic"><use href="#blend"/></svg></button><button aria-label="分解"><svg class="ic"><use href="#explode"/></svg></button>
    </div>
    <i class="grip-h tall"></i>
    <div class="stack">
      <button aria-label="前置"><svg class="ic"><use href="#order1"/></svg></button><button aria-label="后置"><svg class="ic"><use href="#order2"/></svg></button><button aria-label="置于对象之上"><svg class="ic"><use href="#order3"/></svg></button><button aria-label="置于对象之下"><svg class="ic"><use href="#order4"/></svg></button>
      <i class="hsep"></i>
      <button class="abc"><span>ABC</span><svg viewBox="0 0 16 16"><path stroke="#333" fill="none" stroke-width="2" d="M2 1v8h6M8 5h6v8"/></svg></button>
      <button aria-label="注释后置"><svg class="ic"><use href="#order3"/></svg></button>
    </div>
  </div>
</main>

<section class="command">
  <i class="cmd-grip"></i>
  <div class="cmd-body">
    <div class="history"><p>命令: 指定对角点:</p><p>命令:</p></div>
    <input class="cmd-input" type="text" aria-label="命令行" value="指定点位置或 [基点(B)/放弃(U)/退出(X)]:">
  </div>
</section>

<footer class="status">
  <div class="coords"><span>1626.8932&lt; 330</span><span>, 0.0000</span></div>
  <div class="modes">
    <button aria-label="推断约束"><svg class="ic"><use href="#snap"/></svg></button><button aria-label="捕捉"><svg class="ic"><use href="#dots"/></svg></button><button class="on" aria-label="栅格"><svg class="ic"><use href="#grid"/></svg></button><button aria-label="正交"><svg class="ic"><use href="#ortho"/></svg></button><button class="on" aria-label="极轴"><svg class="ic"><use href="#polar"/></svg></button><button aria-label="对象捕捉"><svg class="ic"><use href="#osnap"/></svg></button><button aria-label="三维对象捕捉"><svg class="ic"><use href="#osnap3"/></svg></button><button class="on" aria-label="对象追踪"><svg class="ic"><use href="#otrack"/></svg></button><button aria-label="动态UCS"><svg class="ic"><use href="#ducs"/></svg></button><button aria-label="动态输入"><svg class="ic"><use href="#dyn"/></svg></button><button aria-label="线宽"><svg class="ic"><use href="#lwt"/></svg></button><button class="on" aria-label="透明度"><svg class="ic"><use href="#tpy"/></svg></button><button aria-label="快捷特性"><svg class="ic"><use href="#qp"/></svg></button><button aria-label="选择循环"><svg class="ic"><use href="#sc"/></svg></button>
  </div>
  <div class="space"><button class="model">模型</button><button aria-label="布局"><svg class="ic"><use href="#new"/></svg></button></div>
</footer>

<div class="taskbar">
  <button class="start" aria-label="开始"><svg viewBox="0 0 12 12"><path fill="#fff" d="M0 2l5-.8v4.500H0zM5.600 1.100L12 0v5.700H5.600zM0 6.300h5v4.500L0 10zM5.600 6.300H12V12l-6.400-1.100z"/></svg></button>
  <label class="find"><svg class="ring" viewBox="0 0 16 16"><circle cx="8" cy="8" r="6.500"/></svg><input type="text" placeholder="在这里输入你要搜索的内容" aria-label="搜索"><svg class="mic" viewBox="0 0 12 16"><path d="M4 2.500q2-2 4 0v6q-2 2-4 0zM1.500 7q0 5 4.500 5t4.500-5M6 12v3"/></svg></label>
  <div class="apps">
    <button aria-label="Edge"><svg viewBox="0 0 16 16"><path fill="#0a7bdc" d="M0 7C1 2 4 0 8 0c5 0 8 3 8 8v2H5c0 4 6 4 9 2v3c-6 3-13 0-12-6 .5-3 3-5 5-5-1 1-2 2-2 3h6C11 2 4 2 0 7z"/></svg></button>
    <button aria-label="电影"><svg viewBox="0 0 18 18"><path fill="#fff" d="M1 7h16v10H1z"/><path stroke="#fff" stroke-width="3" d="M1 4l15-3" stroke-dasharray="2.500 1.500"/></svg></button>
    <button aria-label="画图"><svg viewBox="0 0 18 18"><path fill="#cfe4f1" stroke="#8ab" d="M2 14C-1 8 5 2 11 4c5 2 6 6 2 7-3 0-2 2-3 4s-6 2-8-1z"/><circle cx="5" cy="9" r="1.500" fill="#e2482e"/><circle cx="9" cy="7" r="1.500" fill="#e9b02d"/><circle cx="5" cy="13" r="1.500" fill="#39a846"/><circle cx="12" cy="8" r="1.300" fill="#2b6fd0"/><path stroke="#d98836" stroke-width="2" d="M9 15l6-13"/></svg></button>
    <button class="active" aria-label="AutoCAD"><svg viewBox="0 0 18 18"><path fill="#c8c8c8" d="M4 2h13v15H4z"/><path fill="#333" d="M9 10h8v4H9z"/><path fill="#e3242b" d="M1 12L6 1h3l5 10-5-1-3 2z"/><path fill="#8e0d14" d="M9 1l5 10-4-1z"/></svg></button>
  </div>
</div>

<svg class="pointer" viewBox="0 0 240 150"><path d="M2 3l232 127M234 110l1 26M207 142l27-12"/></svg>

<div class="mark"><span class="big">Ba</span><span class="sub">jing</span></div>
<svg class="paw" viewBox="0 0 32 20"><ellipse cx="9" cy="11" rx="6" ry="10"/><ellipse cx="24" cy="12" rx="7" ry="10"/></svg>

<aside class="brand">
  <svg class="deer" viewBox="240 100 145 185"><path fill="#ccc" d="M254 127l12 6q10-3 16 4l16 8 2 9-13 4q-7 1-8 10 0 22 26 30l42 2q15 3 13 18l-4 14 7 30 2 17h-12l1-4-9-33-20-19-37 5-6 20-5 27-2 5h-12l5-37q-1-10-7-19-14-14-10-34 2-18 14-34-7-6-7-13-5-5-6-13z"/><path stroke="#ccc" stroke-width="4" d="M284 136l20 2 30 2q18-2 24-12l16-13M290 136l-5-18M302 138l-4-25M318 138l-15-18M306 133l8-22M334 138q-12-4-14-16M345 135l-6-14M356 127l14-2"/></svg>
  <div class="words">
    <div class="name"><span>3D</span>溜溜网</div>
    <div class="url">3D66.COM</div>
  </div>
</aside>
</body>
</html>
```
FILE: styles.css
```css
*, *::before { box-sizing: border-box; }
html { height: 100%; }
body {
  margin: 0;
  position: relative;
  height: 100vh;
  display: flex;
  flex-direction: column;
  overflow: hidden;
  background: #686868;
  font: 9px/12px "Noto Sans CJK SC", sans-serif;
  color: #222;
}
button, input, select { font: inherit; color: inherit; border: 0; padding: 0; margin: 0; background: none; border-radius: 0; }
button { display: flex; align-items: center; justify-content: center; flex: none; }
input, select { outline: 0; min-width: 0; }
select { appearance: none; }
p { margin: 0; }
svg { display: block; flex: none; fill: none; }
.sprite { position: absolute; width: 0; height: 0; }
.ic { width: 14px; height: 14px; stroke: #5b6571; stroke-width: 1; }

/* header */
.app-head { display: flex; flex: none; height: 33px; background: linear-gradient(#a4a4a4, #555); }
.app-btn { width: 30px; height: 29px; background: linear-gradient(#c2c2c2, #8c8c8c); border: 1px solid #555; }
.app-btn svg { width: 28px; height: 28px; }
.head-rows { flex: 1; display: flex; flex-direction: column; min-width: 0; }
.titlebar { display: flex; height: 18px; background: #fff; }
.quick, .info { display: flex; align-items: center; background: linear-gradient(#b0b0b0, #8c8c8c); }
.quick { padding-left: 4px; }
.titlebar .tool { height: 18px; }
.titlebar .drop { width: 9px; color: #444; }
.titlebar .drop.last { width: 12px; color: #111; border-left: 1px solid #777; height: 18px; }
.title-gap { flex: 1; }
.tool { width: 17px; height: 16px; }
.drop { width: 9px; height: 16px; color: #555; }
.drop svg { width: 6px; height: 6px; }
.dim { opacity: .5; }
.title-combo { width: 131px; height: 16px; margin-left: 4px; padding: 0 4px 0 1px; background: linear-gradient(#f6f6f6, #d9d9d9); }
.title-combo select { color: #222; }
.expand { width: 11px; height: 18px; background: #777; border: 1px solid #555; }
.expand svg { width: 8px; height: 8px; }
.search { width: 130px; height: 15px; padding: 0 3px; background: #fcfcfc; font-size: 8px; font-style: italic; }
.search::placeholder { color: #555; opacity: 1; }
.info > .tool { width: 18px; }
.login { width: 80px; height: 18px; justify-content: flex-start; gap: 2px; padding-left: 2px; color: #f2f2f2; }
.exch { margin: 0 8px 0 2px; }
.winbtns { display: flex; width: 120px; justify-content: flex-end; padding: 0 3px 0 0; }
.winbtns button { width: 33px; }
.winbtns svg { width: 9px; height: 9px; stroke: #888; }
.menubar { display: flex; flex: 1; align-items: center; gap: 17px; padding-left: 10px; color: #f1f1f1; background: linear-gradient(#777 0, #8a8a8a 20%, #5a5a5a); }
.menubar button { height: 15px; }
.docbtns { display: flex; margin-left: auto; gap: 2px; padding-right: 2px; }
.docbtns svg { width: 10px; height: 10px; stroke: #222; stroke-width: 2; }

/* toolbars */
.bar { display: flex; flex: none; align-items: center; background: #5f5f5f; }
.row-one { height: 18px; }
.row-two { height: 22px; gap: 3px; padding-bottom: 2px; background: #686868; border-top: 1px solid #777; }
.group { display: flex; align-items: center; flex: none; height: 16px; background: #eee; }
.row-two .group { height: 17px; }
.grow { flex: 1; min-width: 0; }
.row-one .group + .group .grip { width: 8px; }
.grip { width: 7px; align-self: stretch; background: #555 repeating-linear-gradient(#777 0 1px, #444 1px 3px) 50% 50% / 3px 10px no-repeat; }
.sep { width: 4px; height: 14px; background: linear-gradient(#777, #777) 50% 0 / 1px 14px no-repeat; }
.combo { display: flex; align-items: center; background: #cacaca; height: 16px; color: #777; padding: 0 4px; }
.combo select { flex: 1; width: 0; }
.combo .chev { width: 7px; height: 7px; stroke: #999; color: #333; }
.stub { width: 43px; }
.w-space { width: 126px; padding-left: 6px; }
.w-layer { width: 219px; }
.w-color { width: 110px; }
.w-type { width: 114px; }
.w-weight { width: 92px; }
.w-plot { width: 88px; padding-left: 7px; }
.row-two .combo { height: 17px; }
.mini { width: 11px; height: 11px; stroke: #666; margin-right: 1px; }
.mini.small { width: 9px; height: 9px; margin: 0 3px; }
.row-two .w-color { padding-left: 0; }
.serif { font-family: "Liberation Serif", serif; }
.mono { font-family: "Liberation Mono", monospace; font-size: 8px; }
.rule { width: 44px; height: 1px; background: #555; margin-right: 3px; }
.rule.short { width: 25px; }

/* workspace */
.work { display: flex; flex: 1; min-height: 0; overflow: hidden; }
.side { flex: none; width: 19px; padding: 0 1px 0 1px; }
.side.right { width: 22px; padding: 0 4px 0 1px; border-left: 1px solid #444; }
.grip-h { display: block; height: 7px; background: #555 linear-gradient(#888, #888) 50% 50% / 10px 1px no-repeat; }
.grip-h.tall { height: 9px; }
.stack { background: #eee; }
.stack button { width: 100%; height: 16px; }
.hsep { display: block; height: 1px; margin: 2px; background: #aaa; }
.view { flex: 1; min-width: 0; display: grid; grid-template: minmax(0, 1fr) 13px / minmax(0, 1fr) 12px; margin-bottom: 2px; border: solid #999; border-width: 1px 3px 0 3px; }
.canvas { position: relative; overflow: hidden; background: #000; }
.drawing { position: absolute; inset: 0; width: 100%; height: 100%; }
.vlabel { position: absolute; left: 4px; top: 4px; color: #ddd; }
.axis { position: absolute; color: #aaa; font: 14px/14px "Liberation Sans", sans-serif; }
.axis-y { left: 12px; top: 323px; }
.axis-x { left: 51px; top: 361px; }
.tip { position: absolute; left: 727px; top: 258px; padding: 0 4px 0 1px; border: 1px solid #b0b0b0; background: #929292; color: #111; }
.cube { position: absolute; right: 12px; top: 9px; width: 66px; height: 72px; display: grid; grid-template: 22px 28px 22px / 19px 28px 19px; place-items: center; color: #bbb; font-size: 10px; }
.cube::before { content: ""; position: absolute; left: 0; top: 3px; width: 66px; height: 66px; border: 7px solid #303030; border-radius: 50%; }
.cube > * { position: relative; }
.cube .n, .cube .s { grid-column: 1 / 4; }
.cube .n { align-self: start; }
.cube .s { align-self: end; }
.cube .w { justify-self: start; margin-left: -3px; }
.cube .e { justify-self: end; margin-right: -3px; }
.cube .face { width: 28px; height: 28px; background: #a5a7a9; border: 4px solid #b7b8b4; color: #444; font-size: 17px; line-height: 18px; }
.wcs { position: absolute; right: 29px; top: 92px; width: 35px; height: 12px; border-radius: 3px; border: 1px solid #aaabb8; background: #888998; color: #3c3c44; font: 8px/10px "Liberation Sans", sans-serif; gap: 4px; }
.wcs svg { width: 6px; height: 6px; stroke: #aaa; }
.navbar { position: absolute; right: 2px; top: 124px; width: 24px; height: 154px; padding: 1px 0; display: flex; flex-direction: column; align-items: center; justify-content: space-between; background: #414141; border-radius: 3px; opacity: .95; }
.navbar svg { width: 17px; height: 17px; stroke: #272727; }
.navbar .dot { width: 7px; height: 7px; align-self: flex-end; }
.floatbar { position: absolute; left: 51px; top: 161px; height: 17px; background: #ededed; border: solid #555; border-width: 1px 0; }
.abc { flex-direction: column; font: bold 6px/6px "Liberation Sans", sans-serif; color: #333; }
.abc svg { width: 12px; height: 8px; }
.float-x { width: 5px; align-self: stretch; background: #555; align-items: flex-start; padding-top: 2px; }
.float-x svg { width: 5px; height: 5px; }
.vscroll { display: grid; grid-template-rows: 14px 214fr 13px 129fr 14px; background: #f0f0f0; }
.vscroll button:first-child { grid-row: 1; }
.vscroll .thumb { grid-row: 3; }
.vscroll button:last-child { grid-row: 5; }
.vscroll svg, .hscroll svg { width: 8px; height: 8px; stroke: #444; stroke-width: 1.5; }
.thumb { background: #cdcdcd; }
.bottom { grid-column: 1 / 3; display: grid; grid-template-columns: 620fr 333fr; background: #f0f0f0; }
.tabs { display: flex; align-items: center; }
.tabnav { width: 11px; height: 13px; border: 1px solid #ccc; }
.tabnav svg { width: 8px; height: 8px; fill: #777; stroke: #777; }
.tab { height: 13px; padding: 0 3px 0 2px; }
.tab.active { padding: 0 8px 0 7px; margin-right: 2px; background: #000; color: #fff; clip-path: polygon(0 0, 100% 0, 90% 100%, 14% 100%); }
.slash { width: 1px; height: 12px; margin: 0 4px 0 3px; background: #444; transform: skewX(-25deg); }
.hscroll { display: grid; grid-template-columns: 4px 14px 139fr 13px 134fr 14px; padding-right: 11px; }
.hscroll .split { background: #c4c4c4; }
.hscroll button:nth-of-type(1) { grid-column: 2; }
.hscroll .thumb { grid-column: 4; }
.hscroll button:last-child { grid-column: 6; }

/* command line */
.command { display: flex; flex: none; height: 44px; background: #a8a8a8; border-bottom: 1px solid #777; font: 10px/12px "Noto Sans Mono CJK SC", "Noto Sans CJK SC", monospace; }
.cmd-grip { width: 12px; background: #a2a2a2 repeating-linear-gradient(#666 0 1px, #a2a2a2 1px 2px) 1px 3px / 9px 4px no-repeat; }
.cmd-body { flex: 1; display: flex; flex-direction: column; background: #c8c8c8; border-top: 1px solid #ddd; }
.history { flex: 1; padding: 0 1px; border-bottom: 1px solid #aaa; }
.cmd-input { height: 13px; padding: 0 1px; background: #fff; color: #111; }

/* status bar */
.status { display: flex; flex: none; height: 16px; background: linear-gradient(#9a9a9a, #7b7b7b); }
.coords { display: flex; align-items: center; gap: 28px; width: 159px; padding-left: 9px; font: 9px/12px "Liberation Serif", serif; }
.modes { display: flex; }
.status button { width: 16px; height: 16px; border: 1px solid #888; border-left-color: #c8c8c8; background: #a9a9a9; }
.status .ic { width: 12px; height: 12px; }
.status .on { background: #b4dfe8; }
.space { display: flex; margin-left: auto; padding-right: 205px; }
.status .model { width: 20px; }

/* taskbar */
.taskbar { display: flex; flex: none; height: 29px; background: #04181c; }
.start { width: 35px; }
.start svg { width: 12px; height: 12px; }
.find { display: flex; align-items: center; width: 255px; padding: 0 12px 0 7px; gap: 6px; background: #f1f1f1; font-size: 10px; }
.find input { flex: 1; height: 20px; }
.find input::placeholder { color: #444; opacity: 1; }
.ring { width: 16px; height: 16px; stroke: #222; stroke-width: 2; }
.mic { width: 12px; height: 14px; stroke: #444; stroke-width: 1.2; }
.apps { display: flex; gap: 6px; padding-left: 2px; }
.apps button { width: 30px; border-bottom: 2px solid #79bcc4; padding-top: 2px; }
.apps svg { width: 16px; height: 16px; }
.apps .active { width: 35px; background: #3a474b; margin-left: -2px; }

/* overlays */
.pointer { position: absolute; left: 179px; top: 28px; width: 240px; height: 150px; pointer-events: none; stroke: #86061c; stroke-width: 3; stroke-linecap: round; }
.mark { position: absolute; right: 178px; bottom: 23px; width: 56px; display: flex; flex-direction: column; color: #fff; opacity: .75; text-shadow: 0 0 2px #777; }
.mark .big { font: bold 40px/40px "Liberation Sans", sans-serif; }
.mark .sub { font: bold 20px/20px "Open Sans", sans-serif; }
.paw { position: absolute; right: 128px; bottom: 86px; width: 32px; height: 20px; fill: #f8f8f8; stroke: #ccc; }
.brand { position: absolute; right: 0; bottom: 0; width: 200px; height: 95px; display: flex; align-items: center; gap: 8px; padding-left: 11px; background: #223055; color: #ccc; }
.deer { width: 45px; height: 62px; }
.words { display: flex; flex-direction: column; gap: 2px; }
.name { font: 500 28px/32px "Noto Sans CJK SC", sans-serif; display: flex; align-items: center; }
.name span { font: 32px/32px Inter, sans-serif; }
.url { font: 300 24px/20px Inter, sans-serif; }
```
